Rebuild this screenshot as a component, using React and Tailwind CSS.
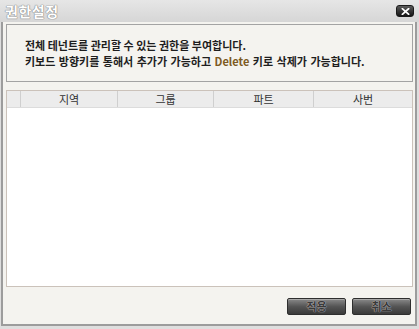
import React from 'react';

const columns = [
  { label: '', width: 'w-[14px]' },
  { label: '지역', width: 'w-[97px]' },
  { label: '그룹', width: 'w-[96px]' },
  { label: '파트', width: 'w-[100px]' },
  { label: '사번', width: 'flex-1' },
];

function CloseButton() {
  return (
    <button className="w-[18px] h-[12px] rounded-[3px] border border-[#1a1a1a] bg-gradient-to-b from-[#5a5a5a] to-[#161616] flex items-center justify-center">
      <svg width="9" height="7" viewBox="0 0 9 7">
        <path d="M1.5 0.8 L7.5 6.2 M7.5 0.8 L1.5 6.2" stroke="#ffffff" strokeWidth="1.8" strokeLinecap="square" />
      </svg>
    </button>
  );
}

function DarkButton({ children }) {
  return (
    <button className="w-[59px] h-[17px] rounded-[2px] border border-[#2e2e2e] bg-gradient-to-b from-[#8a8a8a] via-[#555555] to-[#3a3a3a] text-[11px] font-bold text-[#3a3a3a] leading-none [text-shadow:0_0_1px_#bdbdbd,0_0_1px_#bdbdbd] shadow-[inset_0_1px_0_#a8a8a8]">
      {children}
    </button>
  );
}

export default function App() {
  return (
    <div className="w-[419px] h-[329px] bg-[#dedede] flex flex-col font-['Noto_Sans_CJK_KR',sans-serif]">
      {/* Title bar */}
      <div className="h-[22px] shrink-0 bg-gradient-to-b from-[#e6e6e6] to-[#d6d6d6] flex items-center justify-between pl-[5px] pr-[5px]">
        <span className="text-[14px] font-bold text-white tracking-[0.5px] [text-shadow:0_0_1px_#8a8a8a,0_0_1px_#8a8a8a,0_0_1px_#8a8a8a]">권한설정</span>
        <CloseButton />
      </div>

      {/* Body */}
      <div className="flex-1 ml-[1px] mr-[2px] mb-[3px] border-x-2 border-b-2 border-[#9c9c9c] bg-[#f4f3ef] pl-[3px] pr-[2px] pt-[2px] flex flex-col">
        {/* Info panel */}
        <div className="h-[58px] shrink-0 border border-[#a3a3a3] bg-[#f4f3ef] pl-[18px] flex flex-col justify-center gap-[2px] text-[11px] font-bold text-[#1e1e1e] leading-[14px]">
          <p>전체 테넌트를 관리할 수 있는 권한을 부여합니다.</p>
          <p className="[word-spacing:1px]">
            키보드 방향키를 통해서 추가가 가능하고 <span className="text-[#7d5a1e]">Delete</span> 키로 삭제가 가능합니다.
          </p>
        </div>

        {/* Table */}
        <div className="mt-[8px] flex-1 border border-[#cbc2ba] bg-white flex flex-col">
          <div className="h-[17px] flex bg-[#ececec] border-b border-[#dcdcdc]">
            {columns.map((col, i) => (
              <div
                key={i}
                className={`${col.width} h-full flex items-center justify-center text-[11px] text-[#333333] border-r border-[#cfcfcf] last:border-r-0`}
              >
                {col.label}
              </div>
            ))}
          </div>
        </div>

        {/* Footer */}
        <div className="h-[37px] shrink-0 flex justify-end items-start pt-[11px] pr-[2px] gap-[6px]">
          <DarkButton>적용</DarkButton>
          <DarkButton>취소</DarkButton>
        </div>
      </div>
    </div>
  );
}
